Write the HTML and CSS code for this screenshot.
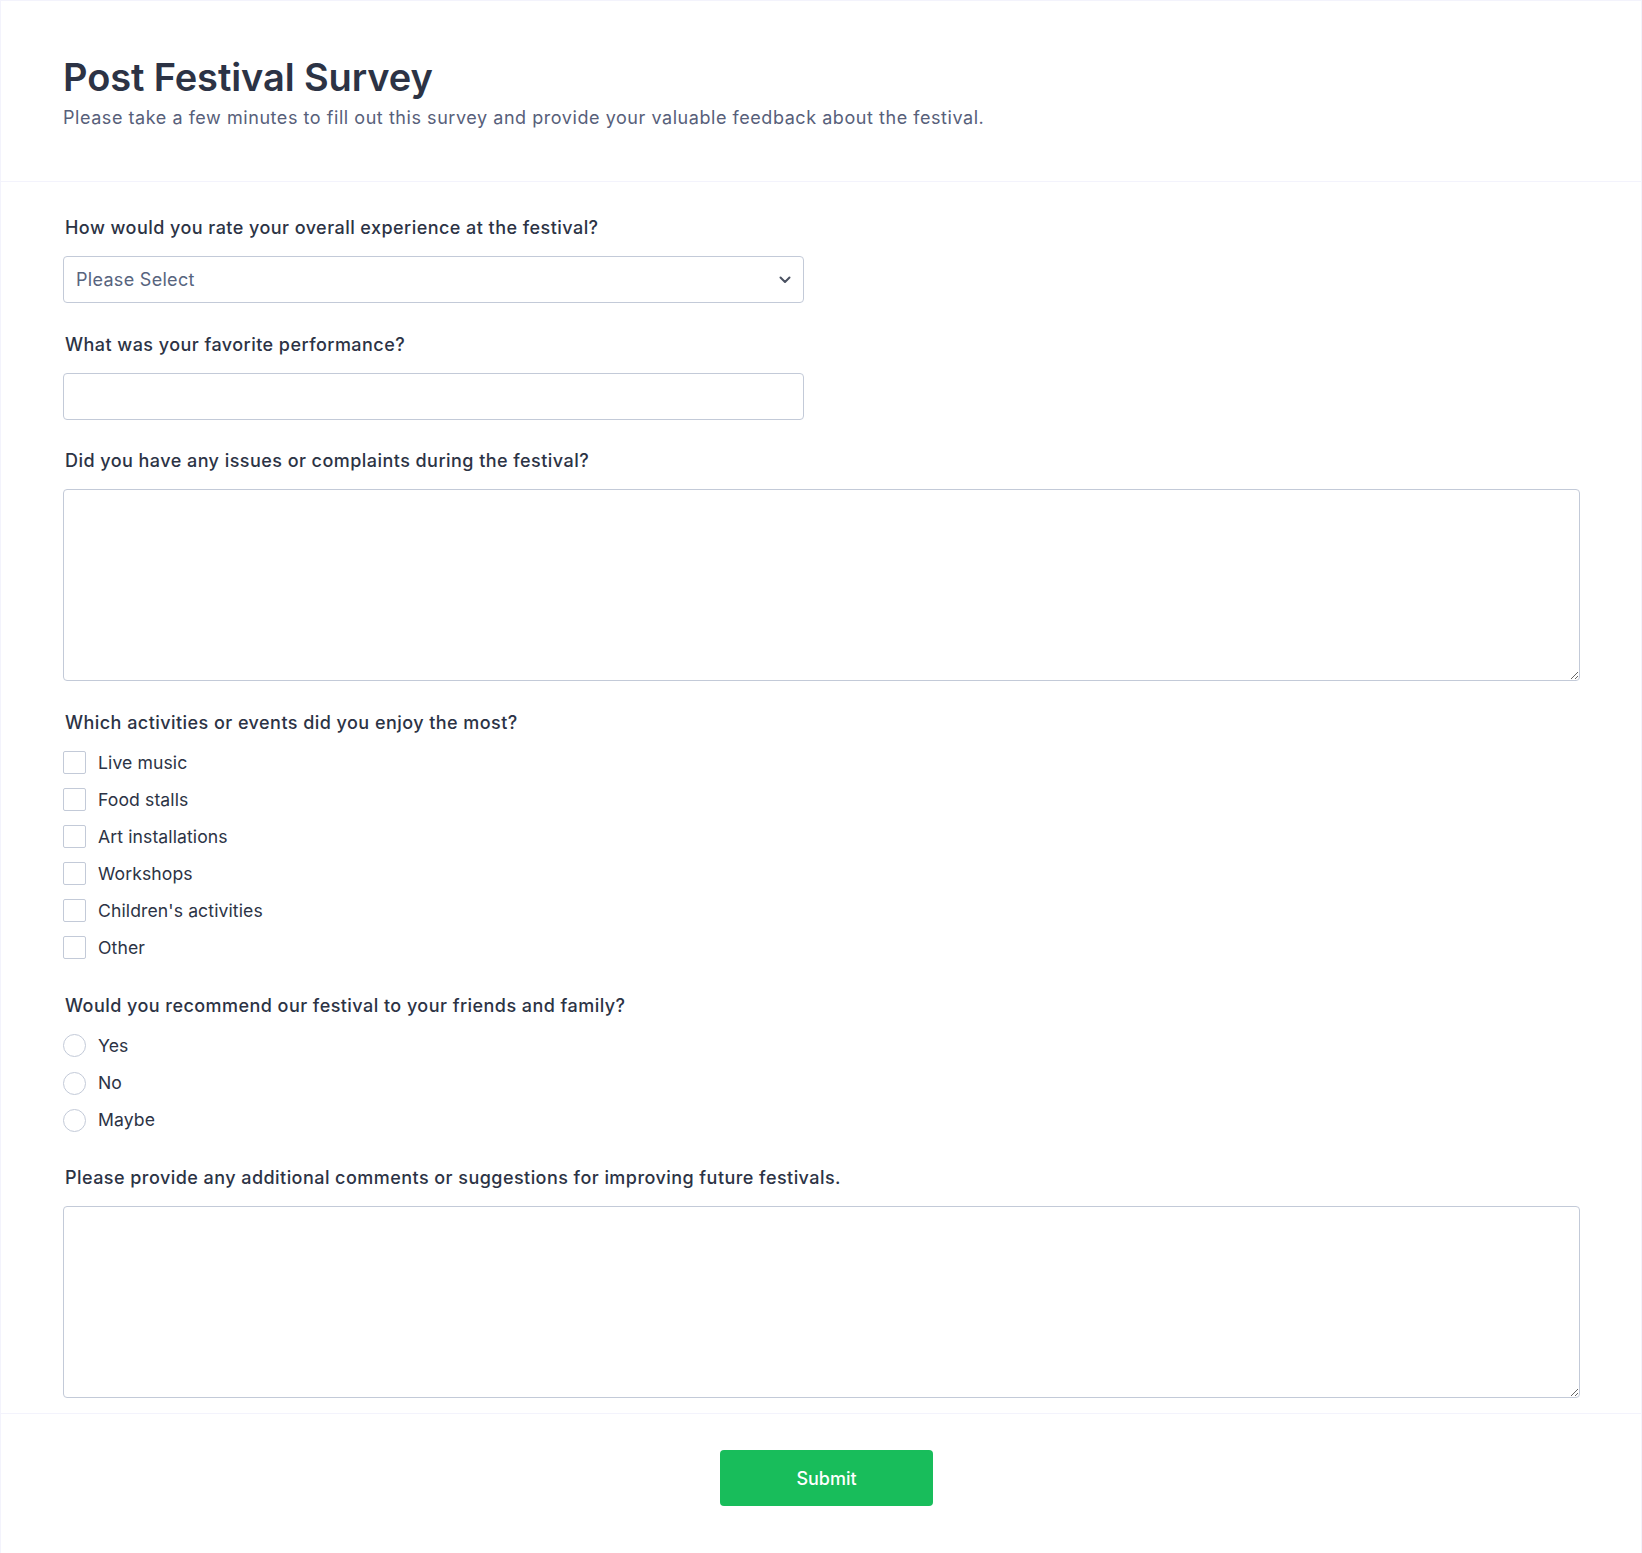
FILE: index.html
```html
<!DOCTYPE html>
<html lang="en">
<head>
<meta charset="utf-8">
<title>Post Festival Survey</title>
<link rel="stylesheet" href="styles.css">
</head>
<body>
<div class="card">
  <header class="header">
    <h1 class="title">Post Festival Survey</h1>
    <p class="subtitle">Please take a few minutes to fill out this survey and provide your valuable feedback about the festival.</p>
  </header>
  <form class="form">
    <div class="field">
      <label class="label">How would you rate your overall experience at the festival?</label>
      <div class="select-wrap">
        <select class="control select">
          <option>Please Select</option>
          <option>Excellent</option>
          <option>Good</option>
          <option>Average</option>
          <option>Poor</option>
        </select>
        <svg class="chevron" width="12" height="8" viewBox="0 0 12 8"><path d="M1.5 1.5 L6 6 L10.5 1.5" fill="none" stroke="#4a5161" stroke-width="2" stroke-linecap="round" stroke-linejoin="round"/></svg>
      </div>
    </div>
    <div class="field">
      <label class="label">What was your favorite performance?</label>
      <input class="control input" type="text">
    </div>
    <div class="field">
      <label class="label">Did you have any issues or complaints during the festival?</label>
      <textarea class="control textarea"></textarea>
    </div>
    <div class="field field-group">
      <label class="label">Which activities or events did you enjoy the most?</label>
      <div class="options">
        <label class="option"><input type="checkbox" class="box"><span>Live music</span></label>
        <label class="option"><input type="checkbox" class="box"><span>Food stalls</span></label>
        <label class="option"><input type="checkbox" class="box"><span>Art installations</span></label>
        <label class="option"><input type="checkbox" class="box"><span>Workshops</span></label>
        <label class="option"><input type="checkbox" class="box"><span>Children's activities</span></label>
        <label class="option"><input type="checkbox" class="box"><span>Other</span></label>
      </div>
    </div>
    <div class="field field-group">
      <label class="label">Would you recommend our festival to your friends and family?</label>
      <div class="options">
        <label class="option"><input type="radio" name="rec" class="box radio"><span>Yes</span></label>
        <label class="option"><input type="radio" name="rec" class="box radio"><span>No</span></label>
        <label class="option"><input type="radio" name="rec" class="box radio"><span>Maybe</span></label>
      </div>
    </div>
    <div class="field">
      <label class="label">Please provide any additional comments or suggestions for improving future festivals.</label>
      <textarea class="control textarea"></textarea>
    </div>
  </form>
  <footer class="footer">
    <button class="submit" type="button">Submit</button>
  </footer>
</div>
</body>
</html>
```
FILE: styles.css
```css
* { box-sizing: border-box; }

html, body {
  margin: 0;
  padding: 0;
  background: #ffffff;
}

body {
  font-family: Inter, "Noto Sans", "Liberation Sans", sans-serif;
  color: #2c3345;
}

.card {
  border: 1px solid #f3f3fc;
  border-bottom: none;
  min-height: 1553px;
}

.header {
  padding: 53px 62px 49px;
  border-bottom: 1px solid #f3f3fc;
}

.title {
  margin: 0;
  font-size: 38px;
  line-height: 46px;
  font-weight: 600;
  color: #2c3345;
  letter-spacing: -0.1px;
}

.subtitle {
  margin: 4px 0 0;
  font-size: 18px;
  line-height: 28px;
  font-weight: 400;
  color: #57607a;
  letter-spacing: 0.55px;
}

.form {
  padding: 34px 61px 15px 62px;
  border-bottom: 1px solid #f3f3fc;
  display: flex;
  flex-direction: column;
  gap: 29.5px;
}

.field {
  display: flex;
  flex-direction: column;
  gap: 16px;
}

.field-group {
  margin-bottom: 4.5px;
}

.label {
  font-size: 18px;
  line-height: 24px;
  font-weight: 500;
  color: #2c3345;
  padding-left: 2px;
  letter-spacing: 0.45px;
}

.control {
  display: block;
  font-family: inherit;
  font-size: 18px;
  color: #2c3345;
  background: #ffffff;
  border: 1px solid #c3cad8;
  border-radius: 4px;
  outline: none;
}

.select-wrap {
  position: relative;
  width: 741px;
}

.select {
  width: 100%;
  height: 47px;
  padding: 0 40px 0 12px;
  appearance: none;
  -webkit-appearance: none;
  color: #57647e;
  letter-spacing: 0.3px;
}

.chevron {
  position: absolute;
  right: 13px;
  top: 20px;
  pointer-events: none;
}

.input {
  width: 741px;
  height: 47px;
  padding: 0 12px;
}

.textarea {
  width: 100%;
  height: 192px;
  padding: 10px 12px;
  resize: vertical;
}

.options {
  display: flex;
  flex-direction: column;
  gap: 13.1px;
}

.option {
  display: flex;
  align-items: center;
  gap: 12px;
  height: 24px;
  font-size: 17.6px;
  line-height: 24px;
  color: #2c3345;
  letter-spacing: 0.1px;
  cursor: pointer;
}

.box {
  appearance: none;
  -webkit-appearance: none;
  margin: 0;
  width: 23px;
  height: 23px;
  border: 1px solid #c3cad8;
  border-radius: 2px;
  background: #ffffff;
  flex: 0 0 auto;
}

.radio {
  border-radius: 50%;
}

.footer {
  padding: 36px 0 48px;
  display: flex;
  justify-content: center;
}

.submit {
  width: 213px;
  height: 56px;
  margin-left: 11px;
  border: none;
  border-radius: 4px;
  background: #18bd5b;
  color: #ffffff;
  font-family: inherit;
  font-size: 18px;
  font-weight: 500;
  cursor: pointer;
}
```
